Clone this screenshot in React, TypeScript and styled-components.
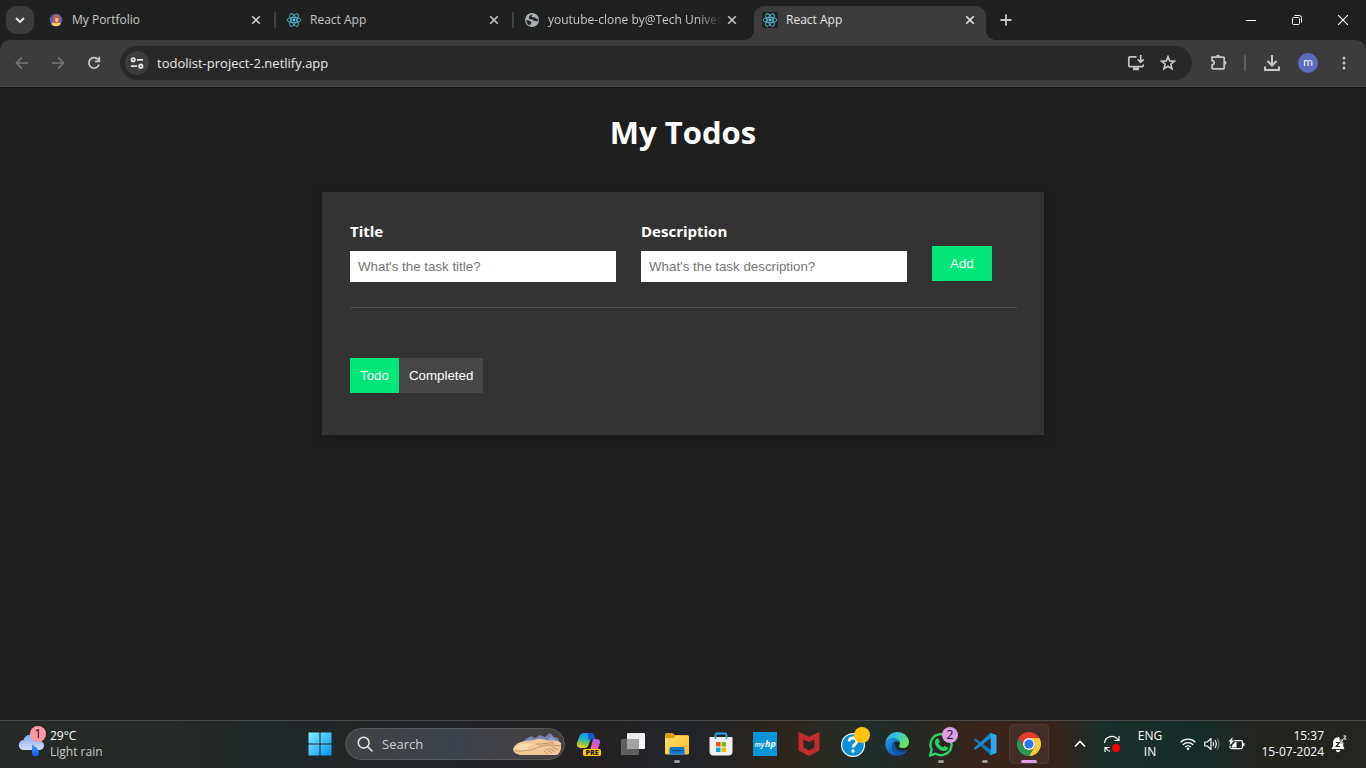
import React from "react";
import styled, { createGlobalStyle, css } from "styled-components";

const uiFont = `"Segoe UI", "Open Sans", "Noto Sans", sans-serif`;

const GlobalStyle = createGlobalStyle`
  * { box-sizing: border-box; }
  body { margin: 0; background: #1e1e1e; font-family: ${uiFont}; }
  svg { display: block; flex: none; }
`;

const Screen = styled.div`
  display: flex;
  flex-direction: column;
  min-height: 100vh;
`;

/* ---------- browser chrome ---------- */

const BrowserChrome = styled.header`
  background: #1f2120;
`;

const TabStrip = styled.div`
  display: flex;
  align-items: center;
  height: 40px;
  padding-left: 6px;
`;

const IconButton = styled.button<{ $size?: number; $dim?: boolean }>`
  display: flex;
  align-items: center;
  justify-content: center;
  flex: none;
  width: ${(p) => p.$size ?? 36}px;
  height: ${(p) => p.$size ?? 36}px;
  padding: 0;
  border: 0;
  background: none;
  color: ${(p) => (p.$dim ? "#777777" : "#c7c7c7")};
`;

const TabSearch = styled(IconButton)`
  width: 28px;
  height: 28px;
  margin-right: 4px;
  border-radius: 10px;
  background: #3c3c3c;
  color: #e3e3e3;
`;

const Tab = styled.div<{ $active?: boolean; $divider?: boolean }>`
  position: relative;
  display: flex;
  align-items: center;
  align-self: stretch;
  flex: 0 1 238px;
  min-width: 0;
  gap: 8px;
  padding: 0 12px 0 10px;
  color: ${(p) => (p.$active ? "#e6e6e6" : "#c7c7c7")};
  ${(p) =>
    p.$divider &&
    css`
      &::after {
        content: "";
        position: absolute;
        right: 0;
        top: 12px;
        width: 2px;
        height: 16px;
        background: #3f4040;
      }
    `}
`;

const ActiveShape = styled.span`
  position: absolute;
  inset: 6px 4px 0 2px;
  border-radius: 10px 10px 0 0;
  background: #3c3c3c;
  &::before,
  &::after {
    content: "";
    position: absolute;
    bottom: 0;
    width: 10px;
    height: 10px;
  }
  &::before {
    left: -10px;
    background: radial-gradient(circle at 0 0, transparent 10px, #3c3c3c 10px);
  }
  &::after {
    right: -10px;
    background: radial-gradient(circle at 100% 0, transparent 10px, #3c3c3c 10px);
  }
`;

const Favicon = styled.span<{ $dark?: boolean }>`
  position: relative;
  flex: none;
  width: 16px;
  height: 16px;
  border-radius: 2px;
  background: ${(p) => (p.$dark ? "#222222" : "none")};
`;

const TabTitle = styled.span<{ $fade?: boolean }>`
  position: relative;
  flex: 1;
  min-width: 0;
  white-space: nowrap;
  font-size: 12px;
  line-height: 16px;
  ${(p) =>
    p.$fade &&
    css`
      margin-right: -6px;
      mask-image: linear-gradient(to right, #000 86%, transparent);
    `}
`;

const TabClose = styled(IconButton)`
  position: relative;
  color: inherit;
`;

const NewTab = styled(IconButton)`
  margin-right: auto;
`;

const WindowButton = styled(IconButton)`
  width: 46px;
  color: #ffffff;
`;

const Toolbar = styled.div`
  display: flex;
  align-items: center;
  height: 47px;
  padding: 0 4px;
  border-bottom: 1px solid #4b4b4b;
  border-radius: 10px 10px 0 0;
  background: #3c3c3c;
`;

const Omnibox = styled.div`
  display: flex;
  align-items: center;
  flex: 1;
  min-width: 0;
  height: 34px;
  margin: 0 8px;
  padding: 0 8px 0 5px;
  border-radius: 17px;
  background: #282828;
`;

const SiteInfo = styled(IconButton)`
  border-radius: 50%;
  background: #3c3c3c;
  color: #e3e3e3;
`;

const Address = styled.input`
  flex: 1;
  min-width: 0;
  padding: 0 8px;
  border: 0;
  outline: 0;
  background: none;
  color: #e8e8e8;
  font: 13px/20px ${uiFont};
`;

const ToolDivider = styled.span`
  width: 2px;
  height: 16px;
  margin: 0 8px;
  background: #5d5d5d;
`;

const Avatar = styled.span`
  width: 20px;
  height: 20px;
  border-radius: 50%;
  background: #5c6bc0;
  color: #ffffff;
  font: 11px/19px Roboto, sans-serif;
  text-align: center;
`;

/* ---------- todo page ---------- */

const Main = styled.main`
  flex: 1;
  padding: 0 16px;
  border-top: 1px solid #171417;
  background: #1e1e1e;
  color: #ffffff;
`;

const PageTitle = styled.h1`
  margin: 22px 0 38px;
  font-size: 31px;
  font-weight: 700;
  line-height: 44px;
  text-align: center;
`;

const Card = styled.section`
  max-width: 722px;
  margin: 0 auto;
  padding: 28px 27px 42px 28px;
  background: #333333;
  box-shadow: 0 3px 8px 2px #1a1a1a;
`;

const TodoForm = styled.form`
  display: flex;
  align-items: flex-end;
  gap: 25px;
  padding-bottom: 25px;
  border-bottom: 1px solid #4f4f4f;
`;

const Field = styled.div`
  display: flex;
  flex-direction: column;
  flex: 0 1 266px;
  min-width: 0;
  gap: 8px;
`;

const FieldLabel = styled.label`
  font-size: 15px;
  font-weight: 700;
  line-height: 23px;
`;

const TextInput = styled.input`
  width: 100%;
  padding: 8px;
  border: 0;
  background: #ffffff;
  font-family: "Liberation Sans", Arial, sans-serif;
`;

const ActionButton = styled.button<{ $primary?: boolean; $wide?: boolean }>`
  padding: 10px ${(p) => (p.$wide ? 18 : 10)}px;
  border: 0;
  background: ${(p) => (p.$primary ? "#00e677" : "#474747")};
  color: #ffffff;
  font-family: "Liberation Sans", Arial, sans-serif;
  font-weight: 500;
`;

const AddSlot = styled.div`
  display: flex;
  padding-bottom: 1px;
`;

const FilterBar = styled.div`
  display: flex;
  margin-top: 50px;
`;

/* ---------- taskbar ---------- */

const Taskbar = styled.footer`
  display: flex;
  align-items: stretch;
  height: 48px;
  padding-bottom: 1px;
  border-top: 1px solid #484848;
  background: linear-gradient(
    to right,
    #262a26 0%,
    #252a27 13%,
    #20282b 20%,
    #222728 25%,
    #202328 34%,
    #252122 44%,
    #1f252b 50%,
    #2e241b 57%,
    #2a2a22 60%,
    #1f2d2a 64%,
    #262822 67%,
    #38241b 72%,
    #38231b 77%,
    #18302b 81%,
    #172c29 88%,
    #23241f 92%,
    #25241f 100%
  );
  color: #ffffff;
`;

const Weather = styled.div`
  display: flex;
  align-items: center;
  flex: 1;
  gap: 4px;
  padding-left: 18px;
`;

const WeatherIcon = styled.span`
  position: relative;
  width: 28px;
  height: 32px;
`;

const Badge = styled.span<{ $color: string }>`
  position: absolute;
  top: -2px;
  right: 0;
  width: 16px;
  height: 16px;
  border-radius: 50%;
  background: ${(p) => p.$color};
  color: #111111;
  font-size: 12px;
  line-height: 16px;
  text-align: center;
`;

const AppBadge = styled(Badge)`
  top: 2px;
  right: 2px;
`;

const TwoLines = styled.div<{ $align?: string }>`
  font-size: 12px;
  line-height: 16px;
  text-align: ${(p) => p.$align ?? "left"};
`;

const Muted = styled.div`
  color: #c9cbc9;
`;

const Apps = styled.nav`
  display: flex;
  align-items: center;
`;

const AppButton = styled.button<{ $active?: boolean }>`
  position: relative;
  display: flex;
  align-items: center;
  justify-content: center;
  width: 40px;
  height: 40px;
  margin: 0 2px;
  padding: 0;
  border: 1px solid ${(p) => (p.$active ? "#4c3b34" : "transparent")};
  border-radius: 4px;
  background: ${(p) => (p.$active ? "#432f27" : "none")};
  font-family: inherit;
`;

const Running = styled.span<{ $active?: boolean }>`
  position: absolute;
  bottom: 0;
  left: 50%;
  transform: translateX(-50%);
  width: ${(p) => (p.$active ? 16 : 6)}px;
  height: 3px;
  border-radius: 2px;
  background: ${(p) => (p.$active ? "#dc9ee6" : "#9b9b97")};
`;

const SearchBox = styled.label`
  display: flex;
  align-items: center;
  width: 220px;
  height: 32px;
  margin: 0 2px 0 3px;
  padding: 0 2px 0 11px;
  gap: 9px;
  border: 1px solid #56595b;
  border-radius: 16px;
  background: linear-gradient(to right, #404446, #3c424b 50%, #46403f);
`;

const SearchInput = styled.input`
  flex: 1;
  min-width: 0;
  padding: 0;
  border: 0;
  outline: 0;
  background: none;
  font: 13px/20px ${uiFont};
  &::placeholder {
    color: #cfd1d3;
  }
`;

const Tray = styled.div`
  display: flex;
  align-items: center;
  width: 315px;
  padding: 0 18px 0 19px;
`;

const TrayButton = styled.button<{ $width: number }>`
  display: flex;
  align-items: center;
  justify-content: center;
  flex: none;
  width: ${(p) => p.$width}px;
  height: 40px;
  padding: 0;
  border: 0;
  background: none;
  color: #ffffff;
  font-family: inherit;
`;

const Clock = styled(TrayButton)`
  flex: 1;
  justify-content: flex-end;
  padding-right: 6px;
`;

/* ---------- drawings ---------- */

const stroke = (width: number) => ({
  fill: "none",
  stroke: "currentColor",
  strokeWidth: width,
});

const CloseIcon = () => (
  <svg width="10" height="10" viewBox="0 0 10 10" {...stroke(1.6)}>
    <path d="M1.2 1.2 8.8 8.8M8.800 1.200 1.200 8.800" />
  </svg>
);

const ReactLogo = () => (
  <svg width="16" height="16" viewBox="0 0 16 16" fill="none" stroke="#58b8d3" strokeWidth="0.9">
    <circle cx="8" cy="8" r="1.4" fill="#61dafb" stroke="none" />
    <ellipse cx="8" cy="8" rx="7" ry="2.7" />
    <ellipse cx="8" cy="8" rx="7" ry="2.7" transform="rotate(60 8 8)" />
    <ellipse cx="8" cy="8" rx="7" ry="2.7" transform="rotate(120 8 8)" />
  </svg>
);

const PortfolioIcon = () => (
  <svg width="16" height="16" viewBox="0 0 16 16">
    <circle cx="8" cy="8" r="6.3" fill="#5166ad" />
    <path d="M3.3 12.3c1-2.3 3-3 5-3s3.6.9 4.5 2.8A6.3 6.3 0 0 1 3.3 12.300z" fill="#f2cf68" />
    <path d="M5 8.500c-.8-3.800 1-6 4-5.800 2.800.2 3.800 2.600 2.700 5.600L11 11l-5.500.2z" fill="#c0604c" />
    <path d="M7.300 6h3v3L9 10.800 7.500 9.800z" fill="#f3b89c" />
  </svg>
);

const GlobeIcon = () => (
  <svg width="16" height="16" viewBox="0 0 16 16">
    <circle cx="8" cy="8" r="7" fill="#a9afb8" />
    <path
      d="M8.8 2.3 7.500 4.200 8.300 5.500 10.800 5.300 11.800 6.600 14 7.200 13.500 9.500 12 9 9.500 8.800 9 7.500 5.500 7.300 4.800 5.600 5.500 3.800zM2 8.200 4.500 8.500 7.200 9.700 7.500 11.200 6.300 11.800 6 13.600 3.600 12.200z"
      fill="#202221"
    />
  </svg>
);

const TuneIcon = () => (
  <svg width="14" height="12" viewBox="0 0 14 12" {...stroke(1.8)}>
    <circle cx="3.200" cy="2.800" r="1.700" />
    <path d="M7 2.800H13M1 9.200h6" />
    <circle cx="10.800" cy="9.200" r="1.700" />
  </svg>
);

const InstallIcon = () => (
  <svg width="18" height="16" viewBox="0 0 18 16" {...stroke(1.700)}>
    <path d="M9.500 1.800H3Q1.800 1.800 1.800 3v7.500q0 1.200 1.200 1.200h12q1.200 0 1.200-1.200V9.500" />
    <path d="M6 13.800h6" strokeWidth="3" />
    <path d="M13.700 0v7M10.700 4.300l3 3 3-3" />
  </svg>
);

const StarIcon = () => (
  <svg width="16" height="16" viewBox="0 0 16 16" {...stroke(1.600)}>
    <path d="m8 1.600 1.700 4.300 4.700.3-3.600 3 1.200 4.500L8 11.200l-4 2.500 1.200-4.500-3.600-3 4.700-.3z" />
  </svg>
);

const PuzzleIcon = () => (
  <svg width="18" height="18" viewBox="-1 1 18 18" {...stroke(1.700)}>
    <path d="M2.200 4.200h11.300q.7 0 .7.7V15q0 .8-.8.8H2.800q-.7 0-.7-.7v-3.200c2.700-.4 2.700-3.800 0-4.200V4.200z" />
    <path d="M6 3.800a2 2 0 0 1 4 0zM14.500 7.800a2 2 0 0 1 0 4z" fill="currentColor" strokeWidth="0" />
  </svg>
);

const DownloadIcon = () => (
  <svg width="18" height="18" viewBox="0 0 18 18" {...stroke(2)}>
    <path d="M9 1v10M4.500 7 9 11.500 13.500 7M2 12.500V16h14v-3.500" />
  </svg>
);

const CloudIcon = () => (
  <svg width="28" height="32" viewBox="0 0 28 32">
    <defs>
      <linearGradient id="cloud" x1="0" y1="0" x2="0" y2="1">
        <stop offset="0" stopColor="#7fa6ee" />
        <stop offset="1" stopColor="#d5def5" />
      </linearGradient>
      <linearGradient id="drop" x1="0" y1="0" x2="0" y2="1">
        <stop offset="0" stopColor="#3ba0ff" />
        <stop offset="1" stopColor="#0a56e8" />
      </linearGradient>
    </defs>
    <path d="M6 22a5 5 0 0 1-.5-10C6.500 8 10 6 14 7c3 .7 5 3 5.200 6h2.300a4.500 4.500 0 0 1 0 9z" fill="url(#cloud)" />
    <path d="M14 16.500c4 2.500 7 5 7 8.500a3.500 3.500 0 0 1-7 0z" fill="url(#drop)" />
  </svg>
);

const WindowsIcon = () => (
  <svg width="24" height="24" viewBox="0 0 24 24">
    <defs>
      <linearGradient id="win" x1="0" y1="0" x2="1" y2="1">
        <stop offset="0" stopColor="#7eefff" />
        <stop offset="1" stopColor="#0a92f5" />
      </linearGradient>
    </defs>
    <path d="M.5.5h11v11H.5zM12.500.5h11v11h-11zM.5 12.500h11v11H.5zM12.500 12.500h11v11h-11z" fill="url(#win)" />
  </svg>
);

const SearchIcon = () => (
  <svg width="16" height="16" viewBox="0 0 16 16" fill="none" stroke="#e6e6e6" strokeWidth="1.600">
    <circle cx="6.700" cy="6.700" r="5.400" />
    <path d="m10.700 10.700 4.200 4.200" strokeLinecap="round" />
  </svg>
);

const DunesArt = () => (
  <svg width="50" height="24" viewBox="0 0 50 24">
    <path d="M9 12C12 7 16 6 19 4l4 2 5-3 5 2 5-4 4 4 4 1 3 8z" fill="#7184ae" />
    <path d="m11 10 7-3 5 3 5-4 6 4 5-5 8 6v3z" fill="#98a3c2" />
    <path d="M1 17C3 11 10 8.500 19 9c6-3 13-2 18 0 5-1 9-1 12 2v6c-1 3-2 5-4 6H8C4 22 1 20 1 17z" fill="#f0c898" />
    <path d="M3 15c8-5 15-4 21-3-7 1-10 4-7 5 4 0 9-3 12-2-5 3-12 5-20 4z" fill="#f8dab0" />
    <path
      d="M3 19c8 0 16 0 24-4 7-3 13-2 21-1M24 12c6 1 12-2 18-1M32 19l4 3M34 17l6 4M37 16l6 4M40 15l6 3"
      fill="none"
      stroke="#b98248"
      strokeWidth="0.800"
    />
  </svg>
);

const CopilotIcon = () => (
  <svg width="26" height="26" viewBox="0 0 26 26">
    <defs>
      <linearGradient id="cpA" x1="0.500" y1="0" x2="0.300" y2="1">
        <stop offset="0" stopColor="#1b8cf0" />
        <stop offset="0.400" stopColor="#20b6c8" />
        <stop offset="0.700" stopColor="#8bc53f" />
        <stop offset="1" stopColor="#f7c623" />
      </linearGradient>
      <linearGradient id="cpB" x1="0.700" y1="0" x2="0.300" y2="1">
        <stop offset="0" stopColor="#a95cf0" />
        <stop offset="0.500" stopColor="#e55bb0" />
        <stop offset="1" stopColor="#fb8a55" />
      </linearGradient>
    </defs>
    <path d="M7 2h8q2 0 1.500 2L12.500 14q-1 3-4 3H4q-4-1-3-5L4 4q1-2 3-2z" fill="url(#cpA)" />
    <path d="M12 2h3.500q2 0 2.700 2l1.300 4h-4q-2 0-3 2z" fill="#1756c4" />
    <path d="M17 8h4q4 .5 3 4l-2.500 7q-1 3-4 3h-6q2 0 2.500-2l2-8q.8-3 1-4z" fill="url(#cpB)" />
    <rect x="7" y="18" width="18" height="7" rx="1.500" fill="#ffc90e" />
    <text x="16" y="24" textAnchor="middle" fontFamily="Open Sans, sans-serif" fontWeight="800" fontSize="7" fill="#201800">PRE</text>
  </svg>
);

const TaskViewIcon = () => (
  <svg width="26" height="26" viewBox="0 0 26 26">
    <defs>
      <linearGradient id="tv" x1="0" y1="0" x2="1" y2="1">
        <stop offset="0" stopColor="#e4e4e4" />
        <stop offset="1" stopColor="#fdfdfd" />
      </linearGradient>
    </defs>
    <rect x="7" y="2" width="18" height="16" rx="1" fill="url(#tv)" />
    <rect x="1" y="8" width="18" height="16" rx="1" fill="#5f5f5f" />
    <path d="M7 8h12v10H7z" fill="#a4a4a4" />
  </svg>
);

const FolderIcon = () => (
  <svg width="26" height="26" viewBox="0 0 26 26">
    <defs>
      <linearGradient id="fold" x1="0" y1="0" x2="1" y2="1">
        <stop offset="0" stopColor="#ffdd69" />
        <stop offset="1" stopColor="#fdbd26" />
      </linearGradient>
    </defs>
    <path d="M1 3.500Q1 2 2.500 2h6L11 4h12.500Q25 4 25 5.500V8H1z" fill="#d99a0b" />
    <path d="M1 7h8l3-2.500h11.500Q25 4.500 25 6v16q0 1.500-1.500 1.500h-21Q1 23.500 1 22z" fill="url(#fold)" />
    <path d="M5.500 23.500V18q0-2 2-2h11q2 0 2 2v5.500z" fill="#0f73c9" />
    <path d="M8.500 19.500h9" stroke="#0a4f93" strokeWidth="1.200" />
    <path d="M6 22.500h14.500v1H6z" fill="#2b8be0" />
  </svg>
);

const StoreIcon = () => (
  <svg width="26" height="26" viewBox="0 0 26 26">
    <path d="M7.500 8V4q0-1.500 1.500-1.500h8q1.500 0 1.500 1.500v4" fill="none" stroke="#2ba7e8" strokeWidth="1.800" />
    <path d="M1.500 6h23v14.500q0 4-4 4h-15q-4 0-4-4z" fill="#f1f1f1" />
    <path d="M7.500 6v2M18.500 6v2" stroke="#2ba7e8" strokeWidth="1.800" />
    <path d="M8 11h4.500v4.500H8z" fill="#f1511b" />
    <path d="M13.500 11H18v4.500h-4.500z" fill="#80bb03" />
    <path d="M8 16.500h4.500V21H8z" fill="#01a4ee" />
    <path d="M13.500 16.500H18V21h-4.500z" fill="#fdb902" />
  </svg>
);

const MyHpIcon = () => (
  <svg width="24" height="24" viewBox="0 0 24 24">
    <path d="M0 0h24v24H0z" fill="#0894d8" />
    <text x="1.500" y="14.500" fontFamily="Open Sans, sans-serif" fontStyle="italic" fontWeight="600" fontSize="7" fill="#fff">my</text>
    <text x="12" y="15" fontFamily="Open Sans, sans-serif" fontStyle="italic" fontWeight="700" fontSize="9" fill="#fff">hp</text>
  </svg>
);

const McAfeeIcon = () => (
  <svg width="24" height="26" viewBox="0 0 24 26">
    <path d="M1.500 1 12 5.800 22.500 1v18.500L12 25 1.500 19.500zM6.500 8.500v8L12 19.500l5.500-3v-8L12 11z" fill="#c22a2e" fillRule="evenodd" />
  </svg>
);

const HelpIcon = () => (
  <svg width="28" height="28" viewBox="0 0 28 28">
    <circle cx="14" cy="15" r="12" fill="#ffffff" />
    <circle cx="14" cy="15" r="10.800" fill="#0d8fd5" />
    <path d="M10 11.500q.3-3.500 4-3.500t4 3.200c0 3-4 3-4 6.300" fill="none" stroke="#fff" strokeWidth="2.800" />
    <circle cx="14" cy="21" r="1.700" fill="#fff" />
  </svg>
);

const EdgeIcon = () => (
  <svg width="24" height="24" viewBox="0 0 24 24">
    <defs>
      <linearGradient id="edA" x1="0" y1="0" x2="1" y2="0.500">
        <stop offset="0" stopColor="#2aa9ee" />
        <stop offset="0.500" stopColor="#35c9d0" />
        <stop offset="1" stopColor="#6be35b" />
      </linearGradient>
      <linearGradient id="edB" x1="0" y1="0" x2="0.500" y2="1">
        <stop offset="0" stopColor="#1f9ce8" />
        <stop offset="1" stopColor="#0c5fb8" />
      </linearGradient>
    </defs>
    <path d="M.5 10.500C1.500 4.500 6.300 0 12 0c7 0 12 5 12 10.200 0 3.800-3 5.800-6.200 5.800-2.500 0-3.800-.8-3.800-1.700 0-.7 1-1 1-3 0-2.500-2.500-4.800-6-4.800C4.500 6.500 1.500 8.500.5 10.500z" fill="url(#edA)" />
    <path d="M.2 11.500C1 8.300 4.500 6.300 8.800 6.300c3.600 0 6.200 2.300 6.200 5-.5-1-1.800-2-3.300-2C8.500 9.300 7 12.500 7.300 15.500c.3 4 3.200 7.500 7.700 8.100-8 2-15-4-14.800-12.100z" fill="url(#edB)" />
    <path d="M10.500 9.500C7 11.500 7.500 19 13 22c2 .8 5.500.5 8.800-3.300.5-.7-.1-1-.8-.7C14 20.500 8.500 16 10.500 9.500z" fill="#12468f" />
    <path d="M7.300 15c-.1 5 4 8.800 8.200 8.500 3-.7 5-2.500 6.500-4.800-6 3.500-13 .3-12.500-7.200-1.400.8-2.200 2-2.200 3.500z" fill="#1354a4" />
  </svg>
);

const WhatsAppIcon = () => (
  <svg width="26" height="26" viewBox="0 0 26 26">
    <path d="M2 24.500 3.700 18.500A10.500 10.500 0 1 1 7.700 22.700z" fill="none" stroke="#27d366" strokeWidth="2.400" strokeLinejoin="round" />
    <path d="M8.700 7.500q1.500-.8 2 .5l1 2.300q.2.700-1.200 2.100c1.300 2.200 2.600 3.200 4.700 4q1-1.600 1.700-1.400l2.600 1.200q.7.4.3 1.600c-.8 2-3 2.700-5.500 1.900-4-1.300-6.700-4.500-7.300-7.200-.4-2 .5-4.200 1.700-5z" fill="#27d366" />
  </svg>
);

const VsCodeIcon = () => (
  <svg width="26" height="26" viewBox="0 0 26 26">
    <path d="M1.800 8.700 3.500 7.200 19 19v5.500z" fill="#1178bd" />
    <path d="M1.800 17.300 3.500 18.800 19 7V1.500z" fill="#1989d0" />
    <path d="M17.500 1.500 24.500 4v18l-7 2.500q1.200-.8 1.200-2.200V3.700q0-1.400-1.200-2.200z" fill="#2ba6f2" />
  </svg>
);

const ChromeIcon = () => (
  <svg width="26" height="26" viewBox="0 0 26 26">
    <path d="M2.600 7A12 12 0 0 1 23.400 7H13L7.800 16z" fill="#e33b2e" />
    <path d="M23.400 7A12 12 0 0 1 13 25l5.200-9A6 6 0 0 0 13 7z" fill="#fcc934" />
    <path d="M13 25A12 12 0 0 1 2.600 7l5.200 9a6 6 0 0 0 10.400 0z" fill="#2a9a4d" />
    <circle cx="13" cy="13" r="6" fill="#ffffff" />
    <circle cx="13" cy="13" r="4.600" fill="#2979ee" />
  </svg>
);

const SyncIcon = () => (
  <svg width="18" height="18" viewBox="0 0 18 18" {...stroke(1.200)}>
    <path d="M1.500 8A7.300 7.300 0 0 1 15 5M16 1v4.500h-4.500M7 16.500Q4 15.500 2.500 12.500M2 17v-4.500h4.500" />
    <circle cx="13" cy="13" r="4" fill="#ff0000" stroke="none" />
  </svg>
);

const WifiIcon = () => (
  <svg width="16" height="14" viewBox="0 0 16 14" {...stroke(1.300)}>
    <path d="M.6 5.200a10.500 10.500 0 0 1 14.800 0M2.900 7.700a7.200 7.200 0 0 1 10.200 0M5.200 10a4 4 0 0 1 5.600 0" />
    <circle cx="8" cy="11.800" r="1.300" fill="currentColor" stroke="none" />
  </svg>
);

const VolumeIcon = () => (
  <svg width="16" height="14" viewBox="0 0 16 14" {...stroke(1.100)}>
    <path d="M.8 5h2.500L7 1.500v11L3.300 9H.8z" strokeLinejoin="round" />
    <path d="M9 5q1.200 2 0 4M11 3q2.600 4 0 8" />
    <path d="M13.200 1.500q3.600 5.500 0 11" stroke="#77807d" />
  </svg>
);

const BatteryIcon = () => (
  <svg width="17" height="14" viewBox="0 0 17 14">
    <path d="M6.500 3.600H13q1.500 0 1.500 1.500v5q0 1.500-1.500 1.500H3.500Q2 11.600 2 10.100V9" fill="none" stroke="#fff" strokeWidth="1.200" />
    <path d="M4 8.500 7 5h1.500v5.500H3.500zM15.200 6h1.300v3h-1.300zM4.800 0 .5 4.500h2L1.500 8.500 6.500 3.500H4z" fill="#fff" />
  </svg>
);

const BellIcon = () => (
  <svg width="16" height="18" viewBox="0 0 16 18">
    <path d="M8.500 2.300A5.300 5.300 0 0 0 2 7.200v4L.5 14h13l-1.300-2.800V8.500H9.500V5.500h-1z" fill="#fff" />
    <path d="M4.800 15h4.500q-.5 2.200-2.200 2.200T4.800 15z" fill="#fff" />
    <path d="M4.800 7.500h3.700L5.200 11.500H9" fill="none" stroke="#25241f" strokeWidth="1.200" />
    <path d="M9.500 5H12L9.500 8h3M12.500 1H15l-2.500 3h3" fill="none" stroke="#fff" strokeWidth="1" />
  </svg>
);

/* ---------- data ---------- */

const tabs = [
  { title: "My Portfolio", icon: <PortfolioIcon />, divider: true },
  { title: "React App", icon: <ReactLogo />, divider: true },
  { title: "youtube-clone by@Tech Univer", icon: <GlobeIcon />, fade: true },
  { title: "React App", icon: <ReactLogo />, active: true },
];

const apps = [
  { name: "Copilot", icon: <CopilotIcon /> },
  { name: "Task view", icon: <TaskViewIcon /> },
  { name: "File Explorer", icon: <FolderIcon />, running: true },
  { name: "Microsoft Store", icon: <StoreIcon /> },
  { name: "myHP", icon: <MyHpIcon /> },
  { name: "McAfee", icon: <McAfeeIcon /> },
  { name: "HP Support", icon: <HelpIcon />, badge: <AppBadge $color="#ffc20e" /> },
  { name: "Edge", icon: <EdgeIcon /> },
  { name: "WhatsApp", icon: <WhatsAppIcon />, running: true, badge: <AppBadge $color="#dc9ee6">2</AppBadge> },
  { name: "Visual Studio Code", icon: <VsCodeIcon />, running: true },
  { name: "Chrome", icon: <ChromeIcon />, running: true, active: true },
];

export default function App() {
  return (
    <Screen>
      <GlobalStyle />
      <BrowserChrome>
        <TabStrip>
          <TabSearch aria-label="Search tabs">
            <svg width="10" height="6" viewBox="0 0 10 6" {...stroke(2)}>
              <path d="m1 1 4 4 4-4" />
            </svg>
          </TabSearch>
          {tabs.map((tab, i) => (
            <Tab key={i} $active={tab.active} $divider={tab.divider}>
              {tab.active && <ActiveShape />}
              <Favicon $dark={tab.active}>{tab.icon}</Favicon>
              <TabTitle $fade={tab.fade}>{tab.title}</TabTitle>
              <TabClose $size={16} aria-label="Close tab">
                <CloseIcon />
              </TabClose>
            </Tab>
          ))}
          <NewTab $size={32} aria-label="New tab">
            <svg width="12" height="12" viewBox="0 0 12 12" {...stroke(1.8)}>
              <path d="M6 .5v11M.5 6h11" />
            </svg>
          </NewTab>
          <WindowButton aria-label="Minimize">
            <svg width="10" height="10" viewBox="0 0 10 10" {...stroke(1)}>
              <path d="M0 5.500h10" />
            </svg>
          </WindowButton>
          <WindowButton aria-label="Restore">
            <svg width="10" height="10" viewBox="0 0 10 10" {...stroke(1)}>
              <rect x="0.500" y="2.500" width="7" height="7" rx="1" />
              <path d="M2.500.5h5q2 0 2 2v5" />
            </svg>
          </WindowButton>
          <WindowButton aria-label="Close">
            <svg width="10" height="10" viewBox="0 0 10 10" {...stroke(1.100)}>
              <path d="m0 0 10 10M10 0 0 10" />
            </svg>
          </WindowButton>
        </TabStrip>

        <Toolbar>
          <IconButton $dim aria-label="Back">
            <svg width="14" height="14" viewBox="0 0 14 14" {...stroke(1.700)}>
              <path d="M13 7H2M7 1.500 1.500 7 7 12.500" />
            </svg>
          </IconButton>
          <IconButton $dim aria-label="Forward">
            <svg width="14" height="14" viewBox="0 0 14 14" {...stroke(1.700)}>
              <path d="M1 7h11M7 1.500 12.500 7 7 12.500" />
            </svg>
          </IconButton>
          <IconButton aria-label="Reload">
            <svg width="14" height="14" viewBox="0 0 14 14" {...stroke(1.800)}>
              <path d="M12 8.500A5.200 5.200 0 1 1 11 3.500L12.500 5M12.300.8V5.300H7.800" />
            </svg>
          </IconButton>
          <Omnibox>
            <SiteInfo $size={24} aria-label="Site information">
              <TuneIcon />
            </SiteInfo>
            <Address aria-label="Address" defaultValue="todolist-project-2.netlify.app" />
            <IconButton $size={32} aria-label="Install app">
              <InstallIcon />
            </IconButton>
            <IconButton $size={32} aria-label="Bookmark">
              <StarIcon />
            </IconButton>
          </Omnibox>
          <IconButton aria-label="Extensions">
            <PuzzleIcon />
          </IconButton>
          <ToolDivider />
          <IconButton aria-label="Downloads">
            <DownloadIcon />
          </IconButton>
          <IconButton aria-label="Profile">
            <Avatar>m</Avatar>
          </IconButton>
          <IconButton aria-label="Menu">
            <svg width="4" height="14" viewBox="0 0 4 14" fill="currentColor">
              <circle cx="2" cy="2" r="1.500" />
              <circle cx="2" cy="7" r="1.500" />
              <circle cx="2" cy="12" r="1.500" />
            </svg>
          </IconButton>
        </Toolbar>
      </BrowserChrome>

      <Main>
        <PageTitle>My Todos</PageTitle>
        <Card>
          <TodoForm onSubmit={(e) => e.preventDefault()}>
            <Field>
              <FieldLabel htmlFor="title">Title</FieldLabel>
              <TextInput id="title" type="text" placeholder="What's the task title?" />
            </Field>
            <Field>
              <FieldLabel htmlFor="description">Description</FieldLabel>
              <TextInput id="description" type="text" placeholder="What's the task description?" />
            </Field>
            <AddSlot>
              <ActionButton type="submit" $primary $wide>
                Add
              </ActionButton>
            </AddSlot>
          </TodoForm>
          <FilterBar>
            <ActionButton type="button" $primary>
              Todo
            </ActionButton>
            <ActionButton type="button">Completed</ActionButton>
          </FilterBar>
        </Card>
      </Main>

      <Taskbar>
        <Weather>
          <WeatherIcon>
            <CloudIcon />
            <Badge $color="#ff99a4">1</Badge>
          </WeatherIcon>
          <TwoLines>
            29°C
            <Muted>Light rain</Muted>
          </TwoLines>
        </Weather>
        <Apps>
          <AppButton aria-label="Start">
            <WindowsIcon />
          </AppButton>
          <SearchBox>
            <SearchIcon />
            <SearchInput type="text" placeholder="Search" aria-label="Search" />
            <DunesArt />
          </SearchBox>
          {apps.map((app) => (
            <AppButton key={app.name} aria-label={app.name} $active={app.active}>
              {app.icon}
              {app.badge}
              {app.running && <Running $active={app.active} />}
            </AppButton>
          ))}
        </Apps>
        <Tray>
          <TrayButton $width={20} aria-label="Show hidden icons">
            <svg width="12" height="8" viewBox="0 0 12 8" {...stroke(1.600)}>
              <path d="M1 6.500 6 1.500l5 5" />
            </svg>
          </TrayButton>
          <TrayButton $width={44} aria-label="Update">
            <SyncIcon />
          </TrayButton>
          <TrayButton $width={32}>
            <TwoLines $align="center">
              ENG
              <div>IN</div>
            </TwoLines>
          </TrayButton>
          <TrayButton $width={44} aria-label="Network">
            <WifiIcon />
          </TrayButton>
          <TrayButton $width={4} aria-label="Volume">
            <VolumeIcon />
          </TrayButton>
          <TrayButton $width={44} aria-label="Battery">
            <BatteryIcon />
          </TrayButton>
          <Clock $width={72}>
            <TwoLines $align="right">
              15:37
              <div>15-07-2024</div>
            </TwoLines>
          </Clock>
          <TrayButton $width={18} aria-label="Notifications">
            <BellIcon />
          </TrayButton>
        </Tray>
      </Taskbar>
    </Screen>
  );
}
